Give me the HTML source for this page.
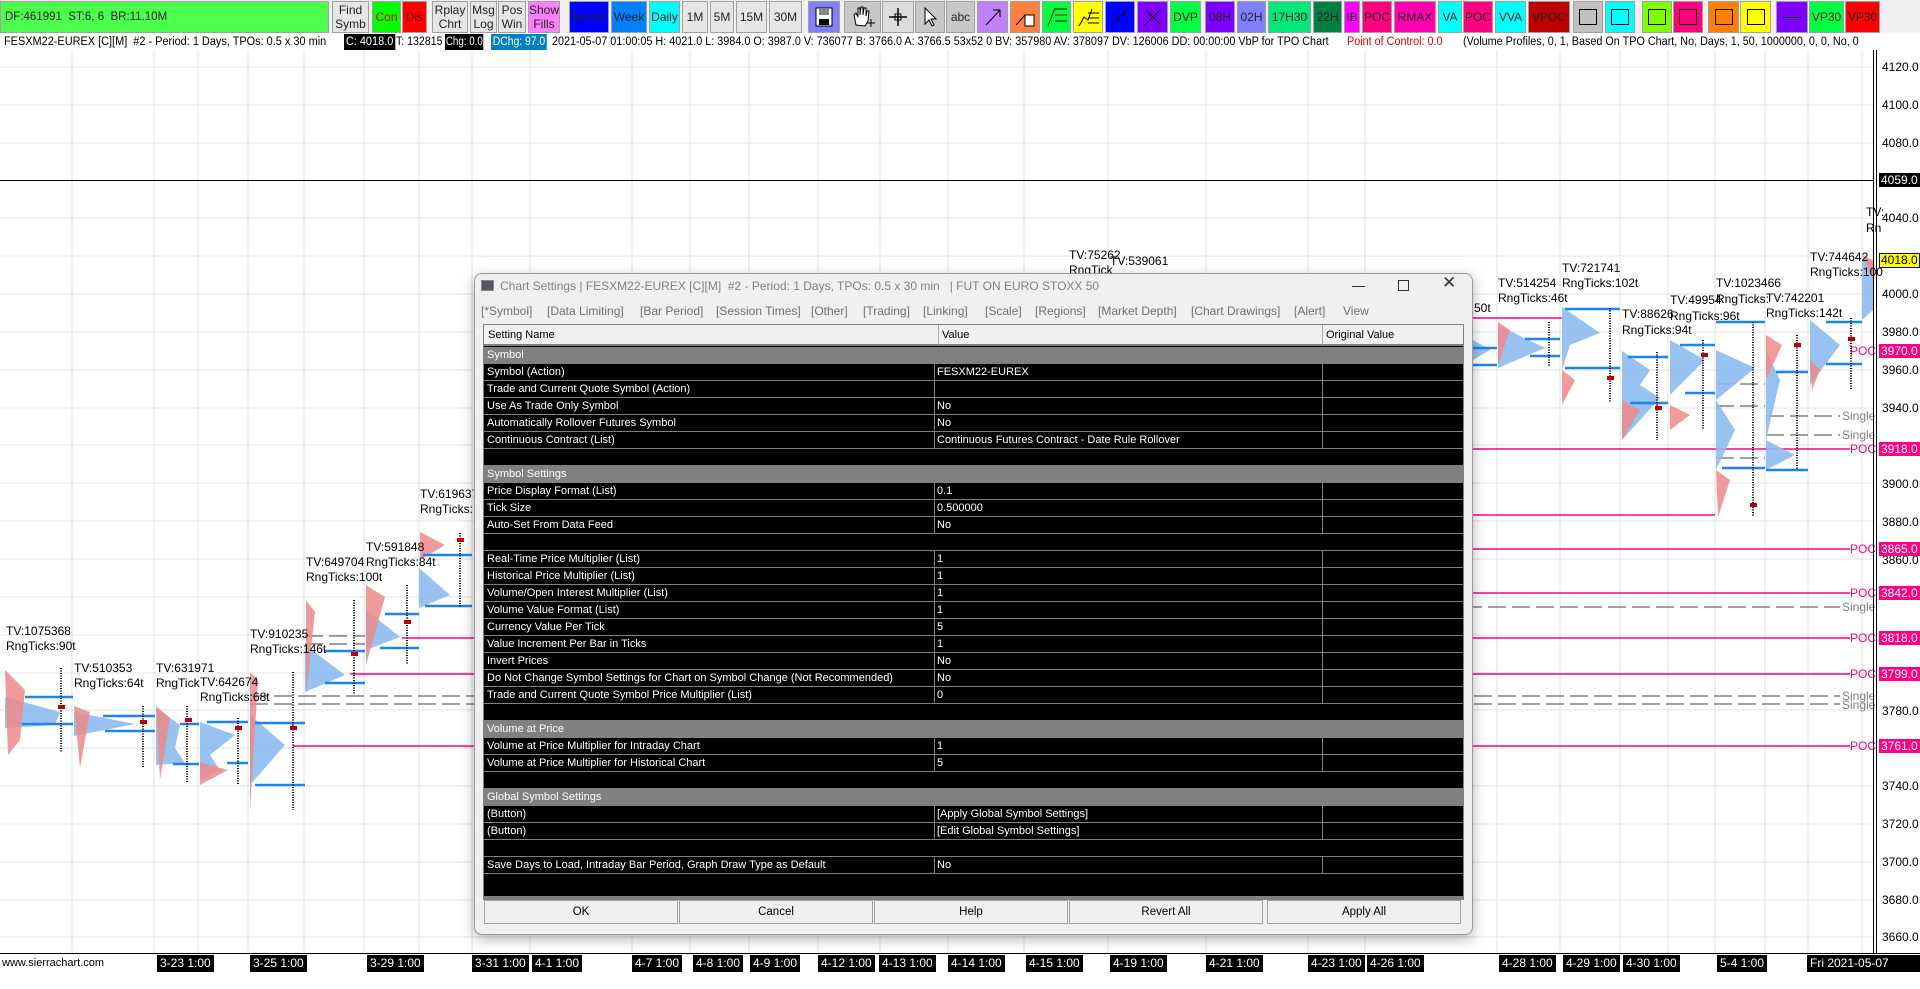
<!DOCTYPE html>
<html><head><meta charset="utf-8"><style>
*{margin:0;padding:0;box-sizing:border-box}
body{width:1920px;height:972px;overflow:hidden;background:#fff;font-family:"Liberation Sans",sans-serif;position:relative}
.a{position:absolute;white-space:nowrap}
.tb{position:absolute;top:1px;height:32px;border:1px solid #a0a0a0;font-size:12px;line-height:14px;display:flex;align-items:center;justify-content:center;text-align:center;color:#222;background:#e6e6e6}
.ib{position:absolute;top:34px;height:16px;font-size:11.5px;line-height:16px;white-space:nowrap;transform-origin:0 0}
.row{position:absolute;left:484px;width:979px;height:17px;background:#000;border-bottom:1px solid #808080;color:#fff;font-size:11px;line-height:16px}
.row span{position:absolute;top:0}
.sec{background:#808080;color:#fff}
.btn{position:absolute;top:900px;height:24px;width:194px;background:#efefef;border:1px solid #a0a0a0;font-size:11.5px;line-height:22px;text-align:center;color:#000}
.tab{position:absolute;top:304px;font-size:12px;color:#707070}
.pl{position:absolute;left:1882px;font-size:12px;line-height:14px;color:#000}
.pb{position:absolute;left:1879px;font-size:12px;line-height:14px;color:#fff;background:#ff0080;padding:0 2px}
.dl{position:absolute;top:955px;height:17px;background:#000;color:#fff;font-size:12px;line-height:17px;padding:0 3px}
.cl{font-size:12px;fill:#000;font-family:"Liberation Sans",sans-serif}
</style></head><body>

<svg class="a" style="left:0;top:0" width="1920" height="972">
<g stroke="#e2e2e2" stroke-width="1">
<line x1="72" y1="50" x2="72" y2="953"/><line x1="154" y1="50" x2="154" y2="953"/><line x1="198" y1="50" x2="198" y2="953"/><line x1="248" y1="50" x2="248" y2="953"/><line x1="304" y1="50" x2="304" y2="953"/><line x1="364" y1="50" x2="364" y2="953"/><line x1="419" y1="50" x2="419" y2="953"/><line x1="472" y1="50" x2="472" y2="953"/><line x1="530" y1="50" x2="530" y2="953"/><line x1="632" y1="50" x2="632" y2="953"/><line x1="690" y1="50" x2="690" y2="953"/><line x1="749" y1="50" x2="749" y2="953"/><line x1="818" y1="50" x2="818" y2="953"/><line x1="880" y1="50" x2="880" y2="953"/><line x1="948" y1="50" x2="948" y2="953"/><line x1="1024" y1="50" x2="1024" y2="953"/><line x1="1108" y1="50" x2="1108" y2="953"/><line x1="1206" y1="50" x2="1206" y2="953"/><line x1="1308" y1="50" x2="1308" y2="953"/><line x1="1365" y1="50" x2="1365" y2="953"/><line x1="1497" y1="50" x2="1497" y2="953"/><line x1="1560" y1="50" x2="1560" y2="953"/><line x1="1620" y1="50" x2="1620" y2="953"/><line x1="1668" y1="50" x2="1668" y2="953"/><line x1="1715" y1="50" x2="1715" y2="953"/><line x1="1765" y1="50" x2="1765" y2="953"/><line x1="1808" y1="50" x2="1808" y2="953"/><line x1="1862" y1="50" x2="1862" y2="953"/>
<line x1="0" y1="67" x2="1873" y2="67"/><line x1="0" y1="105" x2="1873" y2="105"/><line x1="0" y1="143" x2="1873" y2="143"/><line x1="0" y1="218" x2="1873" y2="218"/><line x1="0" y1="256" x2="1873" y2="256"/><line x1="0" y1="294" x2="1873" y2="294"/><line x1="0" y1="332" x2="1873" y2="332"/><line x1="0" y1="370" x2="1873" y2="370"/><line x1="0" y1="408" x2="1873" y2="408"/><line x1="0" y1="445" x2="1873" y2="445"/><line x1="0" y1="483" x2="1873" y2="483"/><line x1="0" y1="521" x2="1873" y2="521"/><line x1="0" y1="559" x2="1873" y2="559"/><line x1="0" y1="597" x2="1873" y2="597"/><line x1="0" y1="635" x2="1873" y2="635"/><line x1="0" y1="673" x2="1873" y2="673"/><line x1="0" y1="710" x2="1873" y2="710"/><line x1="0" y1="748" x2="1873" y2="748"/><line x1="0" y1="786" x2="1873" y2="786"/><line x1="0" y1="824" x2="1873" y2="824"/><line x1="0" y1="862" x2="1873" y2="862"/><line x1="0" y1="900" x2="1873" y2="900"/><line x1="0" y1="937" x2="1873" y2="937"/>
</g>
<line x1="0" y1="180.5" x2="1873" y2="180.5" stroke="#000"/>
<g stroke="#ff0080" stroke-width="1.5">
<line x1="402" y1="638" x2="1850" y2="638"/><line x1="350" y1="674" x2="1850" y2="674"/><line x1="293" y1="746" x2="1850" y2="746"/>
<line x1="1200" y1="549" x2="1850" y2="549"/><line x1="1200" y1="593" x2="1850" y2="593"/><line x1="1200" y1="449" x2="1850" y2="449"/><line x1="1473" y1="318" x2="1562" y2="318"/><line x1="1473" y1="515" x2="1715" y2="515"/>
</g>
<g stroke="#808080" stroke-width="1.5" stroke-dasharray="18,6">
<line x1="250" y1="696" x2="1840" y2="696"/><line x1="250" y1="704" x2="1840" y2="704"/><line x1="1200" y1="607" x2="1840" y2="607"/><line x1="305" y1="636" x2="365" y2="636"/><line x1="305" y1="644" x2="365" y2="644"/><line x1="1766" y1="416" x2="1840" y2="416"/><line x1="1766" y1="435" x2="1840" y2="435"/><line x1="1716" y1="384" x2="1765" y2="384"/><line x1="1716" y1="406" x2="1765" y2="406"/><line x1="1716" y1="458" x2="1765" y2="458"/>
</g>
<g font-size="12" fill="#808080" font-family="Liberation Sans,sans-serif"><text x="1842" y="420">Single</text><text x="1842" y="439">Single</text><text x="1842" y="611">Single</text><text x="1842" y="700">Single</text><text x="1842" y="709">Single</text></g>
<g font-size="12" fill="#ff0080" font-family="Liberation Sans,sans-serif"><text x="1850" y="355">POC</text><text x="1850" y="453">POC</text><text x="1850" y="553">POC</text><text x="1850" y="597">POC</text><text x="1850" y="642">POC</text><text x="1850" y="678">POC</text><text x="1850" y="750">POC</text></g>
<g fill="#8cbcf0" opacity="0.9">
<polygon points="5,697 60,712 55,725 5,728"/><polygon points="74,712 135,724 74,736"/><polygon points="156,708 180,725 175,748 185,763 156,765"/><polygon points="200,722 235,735 210,755 220,770 200,780"/><polygon points="250,715 285,745 250,785"/><polygon points="305,645 345,675 305,692"/><polygon points="366,610 400,637 366,650"/><polygon points="419,568 450,595 419,608"/>
<polygon points="1473,340 1490,350 1473,360"/><polygon points="1498,325 1545,348 1498,368"/><polygon points="1562,307 1600,333 1570,345 1562,370"/><polygon points="1622,351 1650,370 1640,385 1660,398 1622,440"/><polygon points="1670,340 1705,360 1670,395"/><polygon points="1716,350 1755,368 1716,400 1735,430 1716,470"/><polygon points="1766,350 1780,380 1766,440 1795,455 1766,470"/><polygon points="1810,320 1840,345 1810,385"/><polygon points="1862,260 1873,262 1873,310 1862,320"/>
</g>
<g fill="#ee8a8a" opacity="0.85">
<polygon points="5,670 25,690 20,740 8,755"/><polygon points="74,706 90,712 80,768"/><polygon points="156,706 170,718 160,780"/><polygon points="200,762 228,770 200,785"/><polygon points="250,672 258,680 250,810"/><polygon points="306,600 315,612 306,695"/><polygon points="366,585 385,597 366,665"/><polygon points="420,532 445,545 420,560"/>
<polygon points="1498,322 1510,330 1498,365"/><polygon points="1562,370 1575,380 1562,405"/><polygon points="1622,400 1640,410 1622,440"/><polygon points="1670,405 1690,415 1670,430"/><polygon points="1716,470 1730,480 1718,517"/><polygon points="1766,335 1782,345 1766,380"/><polygon points="1810,360 1820,370 1812,390"/><polygon points="1862,255 1873,260 1873,280"/>
</g>
<g stroke="#1a86f0" stroke-width="2.5">
<line x1="25" y1="697" x2="73" y2="697"/><line x1="22" y1="724" x2="73" y2="724"/><line x1="103" y1="716" x2="155" y2="716"/><line x1="105" y1="731" x2="155" y2="731"/><line x1="180" y1="724" x2="199" y2="724"/><line x1="173" y1="764" x2="199" y2="764"/><line x1="207" y1="722" x2="248" y2="722"/><line x1="227" y1="763" x2="248" y2="763"/><line x1="255" y1="723" x2="305" y2="723"/><line x1="255" y1="785" x2="305" y2="785"/><line x1="325" y1="651" x2="365" y2="651"/><line x1="325" y1="683" x2="365" y2="683"/><line x1="385" y1="614" x2="419" y2="614"/><line x1="380" y1="648" x2="419" y2="648"/><line x1="423" y1="555" x2="472" y2="555"/><line x1="425" y1="606" x2="472" y2="606"/>
<line x1="1473" y1="348" x2="1497" y2="348"/><line x1="1473" y1="365" x2="1497" y2="365"/><line x1="1525" y1="339" x2="1560" y2="339"/><line x1="1530" y1="356" x2="1560" y2="356"/><line x1="1565" y1="309" x2="1620" y2="309"/><line x1="1565" y1="368" x2="1620" y2="368"/><line x1="1628" y1="357" x2="1668" y2="357"/><line x1="1630" y1="403" x2="1668" y2="403"/><line x1="1680" y1="345" x2="1715" y2="345"/><line x1="1685" y1="393" x2="1715" y2="393"/><line x1="1716" y1="322" x2="1765" y2="322"/><line x1="1722" y1="468" x2="1765" y2="468"/><line x1="1776" y1="372" x2="1808" y2="372"/><line x1="1766" y1="470" x2="1808" y2="470"/><line x1="1826" y1="322" x2="1862" y2="322"/><line x1="1826" y1="364" x2="1862" y2="364"/>
</g>
<g stroke="#000" stroke-width="2" stroke-dasharray="1,1.5">
<line x1="61" y1="668" x2="61" y2="753"/><line x1="143" y1="706" x2="143" y2="768"/><line x1="187" y1="706" x2="187" y2="782"/><line x1="238" y1="718" x2="238" y2="785"/><line x1="293" y1="672" x2="293" y2="810"/><line x1="354" y1="600" x2="354" y2="695"/><line x1="407" y1="585" x2="407" y2="665"/><line x1="460" y1="533" x2="460" y2="607"/>
<line x1="1549" y1="322" x2="1549" y2="366"/><line x1="1610" y1="308" x2="1610" y2="403"/><line x1="1657" y1="352" x2="1657" y2="440"/><line x1="1703" y1="340" x2="1703" y2="430"/><line x1="1753" y1="322" x2="1753" y2="517"/><line x1="1797" y1="335" x2="1797" y2="470"/><line x1="1851" y1="318" x2="1851" y2="390"/>
</g>
<g fill="#c00000"><rect x="58" y="705" width="7" height="4"/><rect x="140" y="720" width="7" height="4"/><rect x="185" y="718" width="7" height="4"/><rect x="235" y="726" width="7" height="4"/><rect x="290" y="726" width="7" height="4"/><rect x="351" y="652" width="7" height="4"/><rect x="404" y="620" width="7" height="4"/><rect x="457" y="538" width="7" height="4"/><rect x="1607" y="376" width="7" height="4"/><rect x="1655" y="406" width="7" height="4"/><rect x="1701" y="353" width="7" height="4"/><rect x="1750" y="503" width="7" height="4"/><rect x="1794" y="343" width="7" height="4"/><rect x="1848" y="337" width="7" height="4"/></g>
<g class="cl">
<text class="cl" x="6" y="635">TV:1075368</text><text class="cl" x="6" y="650">RngTicks:90t</text>
<text class="cl" x="74" y="672">TV:510353</text><text class="cl" x="74" y="687">RngTicks:64t</text>
<text class="cl" x="156" y="672">TV:631971</text><text class="cl" x="156" y="687">RngTick</text>
<text class="cl" x="200" y="686">TV:642674</text><text class="cl" x="200" y="701">RngTicks:68t</text>
<text class="cl" x="250" y="638">TV:910235</text><text class="cl" x="250" y="653">RngTicks:146t</text>
<text class="cl" x="306" y="566">TV:649704</text><text class="cl" x="306" y="581">RngTicks:100t</text>
<text class="cl" x="366" y="551">TV:591848</text><text class="cl" x="366" y="566">RngTicks:84t</text>
<text class="cl" x="420" y="498">TV:619637</text><text class="cl" x="420" y="513">RngTicks:</text>
<text class="cl" x="1069" y="259">TV:75262</text><text class="cl" x="1110" y="265">TV:539061</text><text class="cl" x="1069" y="274">RngTick</text>
<text class="cl" x="1474" y="312">50t</text>
<text class="cl" x="1498" y="287">TV:514254</text><text class="cl" x="1498" y="302">RngTicks:46t</text>
<text class="cl" x="1562" y="272">TV:721741</text><text class="cl" x="1562" y="287">RngTicks:102t</text>
<text class="cl" x="1622" y="318">TV:88626</text><text class="cl" x="1622" y="334">RngTicks:94t</text>
<text class="cl" x="1670" y="304">TV:49954</text><text class="cl" x="1670" y="320">RngTicks:96t</text>
<text class="cl" x="1716" y="287">TV:1023466</text><text class="cl" x="1716" y="303">RngTicks:</text>
<text class="cl" x="1766" y="302">TV:742201</text><text class="cl" x="1766" y="317">RngTicks:142t</text>
<text class="cl" x="1810" y="261">TV:744642</text><text class="cl" x="1810" y="276">RngTicks:100</text>
<text class="cl" x="1866" y="216">TV:</text><text class="cl" x="1866" y="232">Rn</text>
</g>
<line x1="1873.5" y1="50" x2="1873.5" y2="953" stroke="#000"/><line x1="1876.5" y1="50" x2="1876.5" y2="953" stroke="#000"/>
<line x1="0" y1="953.5" x2="1920" y2="953.5" stroke="#000"/>
</svg>

<div class="pl" style="top:60px">4120.0</div><div class="pl" style="top:98px">4100.0</div><div class="pl" style="top:136px">4080.0</div>
<div class="a" style="left:1879px;top:173px;background:#000;color:#fff;font-size:12px;line-height:14px;padding:0 2px">4059.0</div>
<div class="pl" style="top:211px">4040.0</div><div class="pl" style="top:287px">4000.0</div><div class="pl" style="top:325px">3980.0</div><div class="pl" style="top:363px">3960.0</div><div class="pl" style="top:401px">3940.0</div><div class="pl" style="top:477px">3900.0</div><div class="pl" style="top:515px">3880.0</div><div class="pl" style="top:553px">3860.0</div><div class="pl" style="top:704px">3780.0</div><div class="pl" style="top:779px">3740.0</div><div class="pl" style="top:817px">3720.0</div><div class="pl" style="top:855px">3700.0</div><div class="pl" style="top:893px">3680.0</div><div class="pl" style="top:930px">3660.0</div>
<div class="a" style="left:1879px;top:253px;background:#ffff00;border:1px solid #0000ff;color:#000;font-size:12px;line-height:13px;padding:0 1px">4018.0</div>
<div class="pb" style="top:344px">3970.0</div><div class="pb" style="top:442px">3918.0</div><div class="pb" style="top:542px">3865.0</div><div class="pb" style="top:586px">3842.0</div><div class="pb" style="top:631px">3818.0</div><div class="pb" style="top:667px">3799.0</div><div class="pb" style="top:739px">3761.0</div>

<div class="a" style="left:2px;top:957px;font-size:11px;color:#000">www.sierrachart.com</div>
<div class="dl" style="left:157px">3-23 1:00</div><div class="dl" style="left:250px">3-25 1:00</div><div class="dl" style="left:367px">3-29 1:00</div><div class="dl" style="left:472px">3-31 1:00</div><div class="dl" style="left:532px">4-1 1:00</div><div class="dl" style="left:632px">4-7 1:00</div><div class="dl" style="left:693px">4-8 1:00</div><div class="dl" style="left:750px">4-9 1:00</div><div class="dl" style="left:818px">4-12 1:00</div><div class="dl" style="left:879px">4-13 1:00</div><div class="dl" style="left:948px">4-14 1:00</div><div class="dl" style="left:1026px">4-15 1:00</div><div class="dl" style="left:1110px">4-19 1:00</div><div class="dl" style="left:1206px">4-21 1:00</div><div class="dl" style="left:1308px">4-23 1:00</div><div class="dl" style="left:1367px">4-26 1:00</div><div class="dl" style="left:1499px">4-28 1:00</div><div class="dl" style="left:1563px">4-29 1:00</div><div class="dl" style="left:1623px">4-30 1:00</div><div class="dl" style="left:1717px">5-4 1:00</div><div class="dl" style="left:1807px;width:113px">Fri 2021-05-07 01:00:05</div>

<div class="a" style="left:0;top:0;width:1920px;height:33px;background:#f0f0f0"></div>
<div class="tb" style="left:0;width:329px;background:#4cff4c;justify-content:flex-start;padding-left:4px;font-size:11.5px">DF:461991&nbsp; ST:6, 6&nbsp; BR:11.10M</div>
<div class="tb" style="left:332px;width:37px">Find<br>Symb</div>
<div class="tb" style="left:372px;width:29px;background:#00ff00;color:#e00000">Con</div>
<div class="tb" style="left:402px;width:25px;background:#ff0000;color:#600">Dis</div>
<div class="tb" style="left:432px;width:36px">Rplay<br>Chrt</div>
<div class="tb" style="left:470px;width:27px">Msg<br>Log</div>
<div class="tb" style="left:498px;width:28px">Pos<br>Win</div>
<div class="tb" style="left:528px;width:32px;background:#ff80ff">Show<br>Fills</div>
<div class="tb" style="left:569px;width:40px;background:#0000ff">Month</div>
<div class="tb" style="left:611px;width:36px;background:#0080ff">Week</div>
<div class="tb" style="left:649px;width:31px;background:#00ffff">Daily</div>
<div class="tb" style="left:682px;width:26px">1M</div><div class="tb" style="left:710px;width:24px">5M</div><div class="tb" style="left:736px;width:31px">15M</div><div class="tb" style="left:769px;width:33px">30M</div>
<div class="tb" style="left:808px;width:32px;background:#8080ff"><svg width="22" height="22"><rect x="3" y="2" width="16" height="18" fill="#fff" stroke="#000"/><rect x="6" y="3" width="10" height="6" fill="#888"/><rect x="6" y="13" width="10" height="6" fill="#000"/></svg></div>
<div class="tb" style="left:844px;width:37px;background:#c8c8c8"><svg width="26" height="24"><path d="M6 20 L4 10 L6 8 L8 12 L8 3 L10 3 L10 10 L11 2 L13 2 L13 10 L14 3 L16 3 L16 11 L17 6 L19 6 L18 16 L15 21 Z" fill="#fff" stroke="#000"/><path d="M17 18 h8 M21 14 v8" stroke="#000"/></svg></div>
<div class="tb" style="left:882px;width:32px;background:#dcdcdc"><svg width="22" height="22"><path d="M11 2 V20 M2 11 H20" stroke="#000" stroke-width="1.5"/><rect x="8" y="8" width="6" height="6" fill="none" stroke="#000"/></svg></div>
<div class="tb" style="left:915px;width:30px;background:#c8c8c8"><svg width="18" height="22"><path d="M4 2 L4 18 L8 14 L11 20 L13 19 L10 13 L15 13 Z" fill="#fff" stroke="#000"/></svg></div>
<div class="tb" style="left:946px;width:29px;background:#c8c8c8">abc</div>
<div class="tb" style="left:977px;width:31px;background:#c080ff"><svg width="22" height="22"><path d="M4 19 L18 4 M11 4 H18 V11" stroke="#000" fill="none"/></svg></div>
<div class="tb" style="left:1010px;width:30px;background:#ff8040"><svg width="24" height="24"><path d="M3 20 L12 10" stroke="#000"/><rect x="12" y="10" width="9" height="11" fill="#fff" stroke="#000"/></svg></div>
<div class="tb" style="left:1042px;width:29px;background:#00ff40"><svg width="24" height="24"><path d="M3 21 L10 3 M10 4 H22 M10 10 H22 M10 16 H22" stroke="#000"/><path d="M10 10 H22" stroke="#c00"/></svg></div>
<div class="tb" style="left:1073px;width:30px;background:#ffff00"><svg width="24" height="24"><path d="M3 21 L8 12 L12 15 L16 4 M12 8 H23 M12 13 H23 M12 18 H23" stroke="#000" fill="none"/></svg></div>
<div class="tb" style="left:1105px;width:30px;background:#0000ff"><svg width="24" height="24"><path d="M3 21 L21 3" stroke="#000" stroke-dasharray="3,2"/><rect x="8" y="13" width="3" height="3" fill="#000"/><rect x="14" y="7" width="3" height="3" fill="#000"/></svg></div>
<div class="tb" style="left:1137px;width:31px;background:#8000ff"><svg width="24" height="24"><path d="M3 21 L21 3 M5 5 L19 19" stroke="#000"/></svg></div>
<div class="tb" style="left:1170px;width:31px;background:#00ff40">DVP</div>
<div class="tb" style="left:1205px;width:30px;background:#8000ff">08H</div>
<div class="tb" style="left:1237px;width:29px;background:#8080ff">02H</div>
<div class="tb" style="left:1268px;width:43px;background:#00e878">17H30</div>
<div class="tb" style="left:1313px;width:29px;background:#008040">22H</div>
<div class="tb" style="left:1344px;width:16px;background:#ff00ff">IB</div>
<div class="tb" style="left:1362px;width:30px;background:#ff0080">POC</div>
<div class="tb" style="left:1394px;width:42px;background:#ff00b0">RMAX</div>
<div class="tb" style="left:1438px;width:24px;background:#00ffff">VA</div>
<div class="tb" style="left:1463px;width:30px;background:#ff0080">POC</div>
<div class="tb" style="left:1495px;width:31px;background:#00ffff">VVA</div>
<div class="tb" style="left:1528px;width:42px;background:#c00000">VPOC</div>
<div class="tb" style="left:1573px;width:30px;background:#c0c0c0"><div style="width:18px;height:16px;border:1px solid #000"></div></div>
<div class="tb" style="left:1605px;width:30px;background:#00ffff"><div style="width:18px;height:16px;border:1px solid #000"></div></div>
<div class="tb" style="left:1642px;width:30px;background:#80ff00"><div style="width:18px;height:16px;border:1px solid #000"></div></div>
<div class="tb" style="left:1673px;width:30px;background:#ff0080"><div style="width:18px;height:16px;border:1px solid #000"></div></div>
<div class="tb" style="left:1708px;width:31px;background:#ff8000"><div style="width:18px;height:16px;border:1px solid #000"></div></div>
<div class="tb" style="left:1740px;width:31px;background:#ffff00"><div style="width:18px;height:16px;border:1px solid #000"></div></div>
<div class="tb" style="left:1776px;width:32px;background:#8000ff"><div style="width:18px;height:1px;background:#000"></div></div>
<div class="tb" style="left:1809px;width:35px;background:#00ff40">VP30</div>
<div class="tb" style="left:1845px;width:35px;background:#ff0000">VP30</div>

<div class="ib" style="left:4px;transform:scaleX(0.95)">FESXM22-EUREX [C][M]&nbsp; #2 - Period: 1 Days, TPOs: 0.5 x 30 min</div>
<div class="ib" style="left:344px;background:#000;color:#fff;padding:0 2px;transform:scaleX(0.95)">C: 4018.0</div>
<div class="ib" style="left:396px;transform:scaleX(0.92)">T: 132815</div>
<div class="ib" style="left:445px;background:#000;color:#fff;padding:0 1px;transform:scaleX(0.85)">Chg: 0.0</div>
<div class="ib" style="left:491px;background:#0080c0;color:#fff;padding:0 2px;transform:scaleX(0.9)">DChg: 97.0</div>
<div class="ib" style="left:552px;transform:scaleX(0.94)">2021-05-07 01:00:05 H: 4021.0 L: 3984.0 O: 3987.0 V: 736077 B: 3766.0 A: 3766.5 53x52 0 BV: 357980 AV: 378097 DV: 126006 DD: 00:00:00 VbP for TPO Chart</div>
<div class="ib" style="left:1347px;color:#e00000;transform:scaleX(0.94)">Point of Control: 0.0</div>
<div class="ib" style="left:1463px;transform:scaleX(0.94)">(Volume Profiles, 0, 1, Based On TPO Chart, No, Days, 1, 50, 1000000, 0, 0, No, 0</div>

<div class="a" style="left:474px;top:273px;width:999px;height:662px;background:#f0f0f0;border:1px solid #9a9a9a;border-radius:8px;box-shadow:0 4px 14px rgba(0,0,0,.3)"></div>
<div class="a" style="left:481px;top:280px;width:13px;height:11px;background:#556;border:1px solid #888"></div>
<div class="a" style="left:500px;top:279px;font-size:12px;color:#808080">Chart Settings | FESXM22-EUREX [C][M]&nbsp; #2 - Period: 1 Days, TPOs: 0.5 x 30 min&nbsp;&nbsp; | FUT ON EURO STOXX 50</div>
<div class="a" style="left:1352px;top:286px;width:13px;height:1px;background:#333"></div>
<div class="a" style="left:1398px;top:280px;width:11px;height:11px;border:1px solid #333"></div>
<div class="a" style="left:1442px;top:273px;font-size:17px;color:#333">&#10005;</div>
<div class="tab" style="left:481px">[*Symbol]</div><div class="tab" style="left:547px">[Data Limiting]</div><div class="tab" style="left:640px">[Bar Period]</div><div class="tab" style="left:716px">[Session Times]</div><div class="tab" style="left:811px">[Other]</div><div class="tab" style="left:863px">[Trading]</div><div class="tab" style="left:923px">[Linking]</div><div class="tab" style="left:985px">[Scale]</div><div class="tab" style="left:1035px">[Regions]</div><div class="tab" style="left:1098px">[Market Depth]</div><div class="tab" style="left:1191px">[Chart Drawings]</div><div class="tab" style="left:1294px">[Alert]</div><div class="tab" style="left:1343px">View</div>
<div class="a" style="left:483px;top:324px;width:981px;height:576px;background:#000;border:1px solid #808080"></div>
<div class="a" style="left:484px;top:325px;width:979px;height:21px;background:#f0f0f0;border-bottom:2px solid #808080;font-size:11px;line-height:20px">
<span class="a" style="left:4px">Setting Name</span><span class="a" style="left:454px;border-left:1px solid #aaa;height:20px;padding-left:3px">Value</span><span class="a" style="left:838px;border-left:1px solid #aaa;height:20px;padding-left:3px">Original Value</span></div>

<div class="row sec" style="top:347px"><span style="left:3px">Symbol</span></div>
<div class="row" style="top:364px"><span style="left:3px">Symbol (Action)</span><span style="left:450px;border-left:1px solid #808080;height:16px;padding-left:2px">FESXM22-EUREX</span><span style="left:838px;border-left:1px solid #808080;height:16px"></span></div>
<div class="row" style="top:381px"><span style="left:3px">Trade and Current Quote Symbol (Action)</span><span style="left:450px;border-left:1px solid #808080;height:16px"></span><span style="left:838px;border-left:1px solid #808080;height:16px"></span></div>
<div class="row" style="top:398px"><span style="left:3px">Use As Trade Only Symbol</span><span style="left:450px;border-left:1px solid #808080;height:16px;padding-left:2px">No</span><span style="left:838px;border-left:1px solid #808080;height:16px"></span></div>
<div class="row" style="top:415px"><span style="left:3px">Automatically Rollover Futures Symbol</span><span style="left:450px;border-left:1px solid #808080;height:16px;padding-left:2px">No</span><span style="left:838px;border-left:1px solid #808080;height:16px"></span></div>
<div class="row" style="top:432px"><span style="left:3px">Continuous Contract (List)</span><span style="left:450px;border-left:1px solid #808080;height:16px;padding-left:2px">Continuous Futures Contract - Date Rule Rollover</span><span style="left:838px;border-left:1px solid #808080;height:16px"></span></div>
<div class="row" style="top:449px"></div>
<div class="row sec" style="top:466px"><span style="left:3px">Symbol Settings</span></div>
<div class="row" style="top:483px"><span style="left:3px">Price Display Format (List)</span><span style="left:450px;border-left:1px solid #808080;height:16px;padding-left:2px">0.1</span><span style="left:838px;border-left:1px solid #808080;height:16px"></span></div>
<div class="row" style="top:500px"><span style="left:3px">Tick Size</span><span style="left:450px;border-left:1px solid #808080;height:16px;padding-left:2px">0.500000</span><span style="left:838px;border-left:1px solid #808080;height:16px"></span></div>
<div class="row" style="top:517px"><span style="left:3px">Auto-Set From Data Feed</span><span style="left:450px;border-left:1px solid #808080;height:16px;padding-left:2px">No</span><span style="left:838px;border-left:1px solid #808080;height:16px"></span></div>
<div class="row" style="top:534px"></div>
<div class="row" style="top:551px"><span style="left:3px">Real-Time Price Multiplier (List)</span><span style="left:450px;border-left:1px solid #808080;height:16px;padding-left:2px">1</span><span style="left:838px;border-left:1px solid #808080;height:16px"></span></div>
<div class="row" style="top:568px"><span style="left:3px">Historical Price Multiplier (List)</span><span style="left:450px;border-left:1px solid #808080;height:16px;padding-left:2px">1</span><span style="left:838px;border-left:1px solid #808080;height:16px"></span></div>
<div class="row" style="top:585px"><span style="left:3px">Volume/Open Interest Multiplier (List)</span><span style="left:450px;border-left:1px solid #808080;height:16px;padding-left:2px">1</span><span style="left:838px;border-left:1px solid #808080;height:16px"></span></div>
<div class="row" style="top:602px"><span style="left:3px">Volume Value Format (List)</span><span style="left:450px;border-left:1px solid #808080;height:16px;padding-left:2px">1</span><span style="left:838px;border-left:1px solid #808080;height:16px"></span></div>
<div class="row" style="top:619px"><span style="left:3px">Currency Value Per Tick</span><span style="left:450px;border-left:1px solid #808080;height:16px;padding-left:2px">5</span><span style="left:838px;border-left:1px solid #808080;height:16px"></span></div>
<div class="row" style="top:636px"><span style="left:3px">Value Increment Per Bar in Ticks</span><span style="left:450px;border-left:1px solid #808080;height:16px;padding-left:2px">1</span><span style="left:838px;border-left:1px solid #808080;height:16px"></span></div>
<div class="row" style="top:653px"><span style="left:3px">Invert Prices</span><span style="left:450px;border-left:1px solid #808080;height:16px;padding-left:2px">No</span><span style="left:838px;border-left:1px solid #808080;height:16px"></span></div>
<div class="row" style="top:670px"><span style="left:3px">Do Not Change Symbol Settings for Chart on Symbol Change (Not Recommended)</span><span style="left:450px;border-left:1px solid #808080;height:16px;padding-left:2px">No</span><span style="left:838px;border-left:1px solid #808080;height:16px"></span></div>
<div class="row" style="top:687px"><span style="left:3px">Trade and Current Quote Symbol Price Multiplier (List)</span><span style="left:450px;border-left:1px solid #808080;height:16px;padding-left:2px">0</span><span style="left:838px;border-left:1px solid #808080;height:16px"></span></div>
<div class="row" style="top:704px"></div>
<div class="row sec" style="top:721px"><span style="left:3px">Volume at Price</span></div>
<div class="row" style="top:738px"><span style="left:3px">Volume at Price Multiplier for Intraday Chart</span><span style="left:450px;border-left:1px solid #808080;height:16px;padding-left:2px">1</span><span style="left:838px;border-left:1px solid #808080;height:16px"></span></div>
<div class="row" style="top:755px"><span style="left:3px">Volume at Price Multiplier for Historical Chart</span><span style="left:450px;border-left:1px solid #808080;height:16px;padding-left:2px">5</span><span style="left:838px;border-left:1px solid #808080;height:16px"></span></div>
<div class="row" style="top:772px"></div>
<div class="row sec" style="top:789px"><span style="left:3px">Global Symbol Settings</span></div>
<div class="row" style="top:806px"><span style="left:3px">(Button)</span><span style="left:450px;border-left:1px solid #808080;height:16px;padding-left:2px">[Apply Global Symbol Settings]</span><span style="left:838px;border-left:1px solid #808080;height:16px"></span></div>
<div class="row" style="top:823px"><span style="left:3px">(Button)</span><span style="left:450px;border-left:1px solid #808080;height:16px;padding-left:2px">[Edit Global Symbol Settings]</span><span style="left:838px;border-left:1px solid #808080;height:16px"></span></div>
<div class="row" style="top:840px"></div>
<div class="row" style="top:857px"><span style="left:3px">Save Days to Load, Intraday Bar Period, Graph Draw Type as Default</span><span style="left:450px;border-left:1px solid #808080;height:16px;padding-left:2px">No</span><span style="left:838px;border-left:1px solid #808080;height:16px"></span></div>
<div class="a" style="left:484px;top:896px;width:979px;height:3px;background:#808080"></div>
<div class="btn" style="left:484px">OK</div><div class="btn" style="left:679px">Cancel</div><div class="btn" style="left:874px">Help</div><div class="btn" style="left:1069px">Revert All</div><div class="btn" style="left:1267px">Apply All</div>
</body></html>
